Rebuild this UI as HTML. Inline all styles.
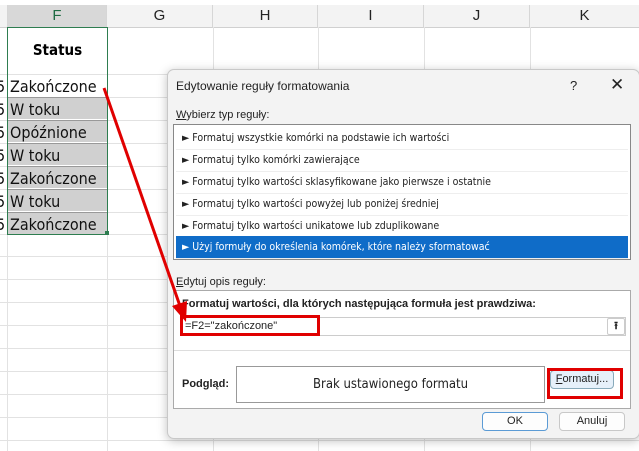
<!DOCTYPE html>
<html><head><meta charset="utf-8"><style>
body{margin:0;width:639px;height:451px;overflow:hidden;background:#fff;position:relative;font-family:"Liberation Sans",sans-serif}
.a{position:absolute}
.hdr{position:absolute;top:5px;height:22px;background:#f3f3f3;border-right:1px solid #d6d6d6;border-bottom:1px solid #d0d0d0;text-align:center;font-size:15px;line-height:22px;color:#222}
.vl{position:absolute;top:27px;bottom:0;width:1px;background:#e2e2e2}
.hl{position:absolute;left:0;right:0;height:1px;background:#e2e2e2}
.cell{position:absolute;left:8px;width:99px;height:22px;font-size:16px;line-height:23px;padding-left:2px;box-sizing:border-box;color:#111;font-family:"DejaVu Sans Condensed","Liberation Sans",sans-serif}
.g{background:#d0d0d0;border-top:1px solid #999}
.five{position:absolute;left:-4px;width:10px;font-size:16px;line-height:23px;overflow:hidden;font-family:"DejaVu Sans Condensed",sans-serif;color:#111}
.dlg{position:absolute;left:167px;top:69px;width:471px;height:368px;background:#f3f3f3;border:1px solid #c8c8c8;border-radius:7px;box-shadow:0 2px 10px rgba(0,0,0,.25);font-size:11px;color:#222}
.it{position:absolute;left:2px;right:2px;height:22px;line-height:22px;padding-left:6px;font-size:10.5px;border-bottom:1px solid #eee;font-family:"DejaVu Sans Condensed","Liberation Sans",sans-serif}
.btn{position:absolute;height:17px;background:#fdfdfd;border:1px solid #c8c8c8;border-radius:4px;text-align:center;line-height:17px;font-size:11px}
</style></head><body>
<div class="hdr" style="left:0;width:7px"></div>
<div class="hdr" style="left:8px;width:98px;color:#1e6b43;background:#d8d8d8;border-bottom:2px solid #1e6b43">F</div>
<div class="hdr" style="left:107px;width:105px">G</div>
<div class="hdr" style="left:213px;width:104px">H</div>
<div class="hdr" style="left:318px;width:105px">I</div>
<div class="hdr" style="left:424px;width:105px">J</div>
<div class="hdr" style="left:530px;width:109px">K</div>
<div class="vl" style="left:7px"></div><div class="vl" style="left:107px"></div><div class="vl" style="left:213px"></div><div class="vl" style="left:318px"></div><div class="vl" style="left:424px"></div><div class="vl" style="left:530px"></div>
<div class="hl" style="top:74px"></div><div class="hl" style="top:97px"></div><div class="hl" style="top:120px"></div><div class="hl" style="top:143px"></div><div class="hl" style="top:166px"></div><div class="hl" style="top:189px"></div><div class="hl" style="top:212px"></div><div class="hl" style="top:234px"></div><div class="hl" style="top:256px"></div><div class="hl" style="top:279px"></div><div class="hl" style="top:302px"></div><div class="hl" style="top:325px"></div><div class="hl" style="top:348px"></div><div class="hl" style="top:371px"></div><div class="hl" style="top:394px"></div><div class="hl" style="top:417px"></div><div class="hl" style="top:440px"></div>
<div class="five" style="top:75px">5</div><div class="five" style="top:98px">5</div><div class="five" style="top:121px">5</div><div class="five" style="top:144px">5</div><div class="five" style="top:167px">5</div><div class="five" style="top:190px">5</div><div class="five" style="top:213px">5</div>
<div class="a" style="left:8px;top:27px;width:99px;height:47px;background:#fff;text-align:center;line-height:47px;font-weight:bold;font-size:15px;font-family:'DejaVu Sans Condensed',sans-serif">Status</div>
<div class="cell" style="top:75px;background:#fff">Zakończone</div>
<div class="cell g" style="top:97px">W toku</div>
<div class="cell g" style="top:120px">Opóźnione</div>
<div class="cell g" style="top:143px">W toku</div>
<div class="cell g" style="top:166px">Zakończone</div>
<div class="cell g" style="top:189px">W toku</div>
<div class="cell g" style="top:212px">Zakończone</div>
<div class="a" style="left:7px;top:27px;width:99px;height:206px;border:1px solid #2e7d50"></div>
<div class="a" style="left:105px;top:231px;width:4px;height:4px;background:#2e7d50"></div>
<div class="dlg">
<div class="a" style="left:8px;top:9px;font-size:12px">Edytowanie reguły formatowania</div>
<div class="a" style="left:402px;top:8px;font-size:13px">?</div>
<div class="a" style="left:442px;top:5px;font-size:17px">✕</div>
<div class="a" style="left:8px;top:39px;font-size:11px"><u>W</u>ybierz typ reguły:</div>
<div class="a" style="left:5px;top:54px;width:456px;height:134px;background:#fff;border:1px solid #888">
<div class="it" style="top:2px">► Formatuj wszystkie komórki na podstawie ich wartości</div>
<div class="it" style="top:24px">► Formatuj tylko komórki zawierające</div>
<div class="it" style="top:46px">► Formatuj tylko wartości sklasyfikowane jako pierwsze i ostatnie</div>
<div class="it" style="top:68px">► Formatuj tylko wartości powyżej lub poniżej średniej</div>
<div class="it" style="top:90px">► Formatuj tylko wartości unikatowe lub zduplikowane</div>
<div class="it" style="top:111px;background:#0f6cc8;color:#fff">► Użyj formuły do określenia komórek, które należy sformatować</div>
</div>
<div class="a" style="left:8px;top:206px"><u>E</u>dytuj opis reguły:</div>
<div class="a" style="left:5px;top:220px;width:456px;height:117px;background:#fff;border:1px solid #aaa">
<div class="a" style="left:8px;top:7px;font-weight:bold;font-size:11px">Formatuj wartości, dla których następująca formuła jest prawdziwa:</div>
<div class="a" style="left:8px;top:26px;width:440px;height:17px;border:1px solid #ccc;font-size:11px;line-height:17px;padding-left:2px">=F2="zakończone"</div>
<div class="a" style="left:433px;top:27px;width:16px;height:15px;border:1px solid #ccc;border-radius:2px;text-align:center;font-size:11px;line-height:15px;font-weight:bold">⭱</div>
<div class="a" style="left:0;right:0;top:59px;height:1px;background:#ddd"></div>
<div class="a" style="left:8px;top:87px;font-weight:bold">Podgląd:</div>
<div class="a" style="left:62px;top:75px;width:307px;height:35px;border:1px solid #999;text-align:center;line-height:35px;font-size:13px;font-family:'DejaVu Sans Condensed',sans-serif">Brak ustawionego formatu</div>
</div>
<div class="btn" style="left:382px;top:300px;width:62px;background:#e6f0fa;border-color:#8ab"><u>F</u>ormatuj...</div>
<div class="btn" style="left:314px;top:342px;width:64px;border-color:#5b9bd5">OK</div>
<div class="btn" style="left:391px;top:342px;width:64px">Anuluj</div>
</div>
<div class="a" style="left:180px;top:315px;width:134px;height:15px;border:3px solid #e00000"></div>
<div class="a" style="left:547px;top:368px;width:70px;height:25px;border:3px solid #e00000"></div>
<svg class="a" style="left:0;top:0" width="639" height="451"><line x1="104" y1="88" x2="180" y2="306" stroke="#e00000" stroke-width="3"/><polygon points="186,322 172,306 187,301" fill="#e00000"/></svg>
</body></html>
